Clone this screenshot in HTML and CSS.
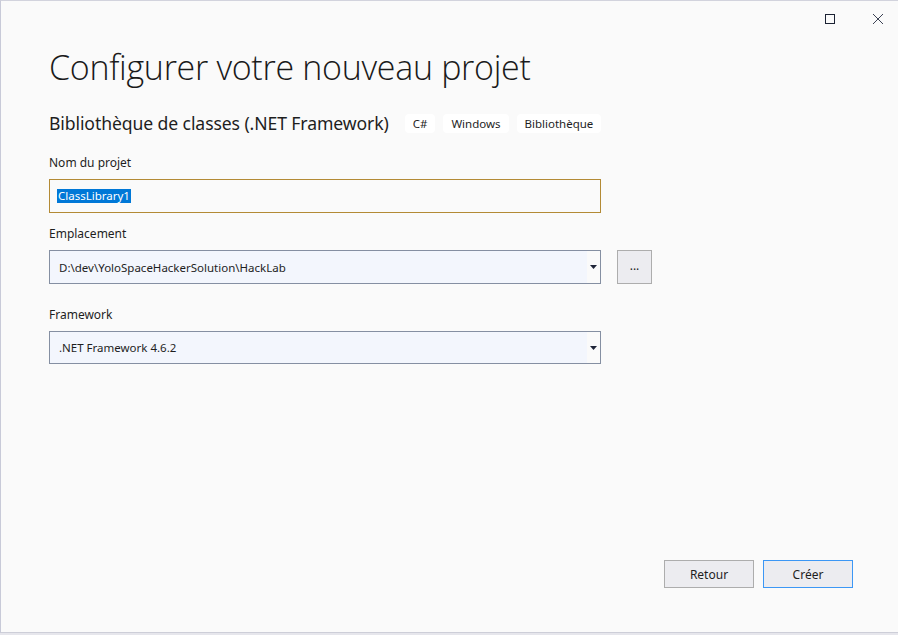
FILE: index.html
```html
<!DOCTYPE html>
<html lang="fr">
<head>
<meta charset="utf-8">
<title>Configurer votre nouveau projet</title>
<link rel="stylesheet" href="styles.css">
</head>
<body>
<div class="window">
  <div class="titlebar">
    <span class="tb-btn" aria-label="Agrandir">
      <svg width="12" height="12" viewBox="0 0 12 12"><rect x="1.5" y="1.5" width="9" height="9" fill="none" stroke="#1b2233" stroke-width="1"/></svg>
    </span>
    <span class="tb-btn" aria-label="Fermer">
      <svg width="12" height="12" viewBox="0 0 12 12"><path d="M1 1 L11 11 M11 1 L1 11" stroke="#3c4254" stroke-width="1" fill="none"/></svg>
    </span>
  </div>
  <div class="content">
    <h1 class="title">Configurer votre nouveau projet</h1>
    <div class="subtitle-row">
      <span class="subtitle">Bibliothèque de classes (.NET Framework)</span>
      <span class="tag">C#</span>
      <span class="tag">Windows</span>
      <span class="tag">Bibliothèque</span>
    </div>

    <label class="label">Nom du projet</label>
    <div class="textbox"><span class="sel">ClassLibrary1</span></div>

    <label class="label label-2">Emplacement</label>
    <div class="row">
      <div class="combo">
        <span class="combo-text">D:\dev\YoloSpaceHackerSolution\HackLab</span>
        <span class="combo-arrow"><svg width="7" height="4" viewBox="0 0 7 4"><path d="M0 0 H7 L3.5 4 Z" fill="#1e2438"/></svg></span>
      </div>
      <div class="browse">...</div>
    </div>

    <label class="label label-3">Framework</label>
    <div class="combo combo-fw">
      <span class="combo-text">.NET Framework 4.6.2</span>
      <span class="combo-arrow"><svg width="7" height="4" viewBox="0 0 7 4"><path d="M0 0 H7 L3.5 4 Z" fill="#1e2438"/></svg></span>
    </div>

    <div class="footer">
      <button class="btn">Retour</button>
      <button class="btn btn-primary">Créer</button>
    </div>
  </div>
</div>
<div class="below"></div>
</body>
</html>
```

FILE: styles.css
```css
html, body {
  margin: 0;
  padding: 0;
}
body {
  width: 898px;
  height: 635px;
  overflow: hidden;
  background: #e6e6ec;
  font-family: "Noto Sans", "Open Sans", sans-serif;
  color: #1e1e1e;
}
.window {
  box-sizing: border-box;
  height: 633px;
  background: #fafafa;
  border-top: 1px solid #d2d3dd;
  border-left: 1px solid #c8cad8;
  border-bottom: 1px solid #cdced8;
  display: flex;
  flex-direction: column;
}
.titlebar {
  display: flex;
  justify-content: flex-end;
  gap: 32px;
  padding: 11px 12px 0 0;
  height: 26px;
  box-sizing: border-box;
}
.tb-btn {
  width: 16px;
  height: 14px;
  display: flex;
  align-items: center;
  justify-content: center;
}
.content {
  flex: 1;
  display: flex;
  flex-direction: column;
  padding-left: 48px;
}
.title {
  margin: 16px 0 0 0;
  font-family: "Open Sans", sans-serif;
  font-weight: 300;
  font-size: 34px;
  line-height: 48px;
  letter-spacing: -0.3px;
  color: #1a1a1a;
}
.subtitle-row {
  display: flex;
  align-items: center;
  margin-top: 22px;
  height: 20px;
}
.subtitle {
  font-size: 17.6px;
  line-height: 20px;
  margin-right: 16px;
  letter-spacing: -0.1px;
  color: #1e1e1e;
}
.tag {
  background: #ffffff;
  border-radius: 4px;
  font-size: 11.5px;
  line-height: 19px;
  padding: 0 8px;
  margin-right: 8px;
  color: #1e1e1e;
}
.label {
  display: block;
  font-size: 12px;
  line-height: 16px;
  margin-top: 22px;
  color: #1e1e1e;
}
.label-2 { margin-top: 13px; }
.label-3 { margin-top: 23px; }
.textbox {
  box-sizing: border-box;
  width: 552px;
  height: 34px;
  margin-top: 8px;
  border: 1px solid #b38a35;
  background: #fafafa;
  display: flex;
  align-items: center;
  padding-left: 7px;
}
.sel {
  background: #0078d7;
  color: #ffffff;
  font-size: 11.5px;
  line-height: 14px;
  padding: 0 1px;
}
.row {
  display: flex;
  gap: 16px;
  margin-top: 8px;
}
.combo {
  box-sizing: border-box;
  width: 552px;
  height: 34px;
  border: 1px solid #858fa2;
  background: #f3f6fd;
  display: flex;
  align-items: stretch;
}
.combo-fw { margin-top: 8px; height: 33px; }
.combo-text {
  flex: 1;
  font-size: 11.5px;
  display: flex;
  align-items: center;
  padding-left: 9px;
  color: #1e1e1e;
}
.combo-arrow {
  width: 13px;
  background: #fafafa;
  display: flex;
  align-items: center;
  justify-content: center;
}
.browse {
  box-sizing: border-box;
  width: 35px;
  height: 34px;
  border: 1px solid #adadad;
  background: #ececf0;
  font-size: 12px;
  display: flex;
  align-items: center;
  justify-content: center;
  padding-bottom: 3px;
}
.footer {
  margin-top: auto;
  display: flex;
  justify-content: flex-end;
  gap: 9px;
  padding: 0 45px 44px 0;
}
.btn {
  box-sizing: border-box;
  width: 90px;
  height: 28px;
  border: 1px solid #adadad;
  background: #ececf0;
  font-family: "Noto Sans", "Open Sans", sans-serif;
  font-size: 12px;
  color: #1e1e1e;
  padding: 0;
}
.btn-primary {
  border-color: #3c97f5;
}
.below {
  height: 2px;
  background: #e6e6ec;
}
```
